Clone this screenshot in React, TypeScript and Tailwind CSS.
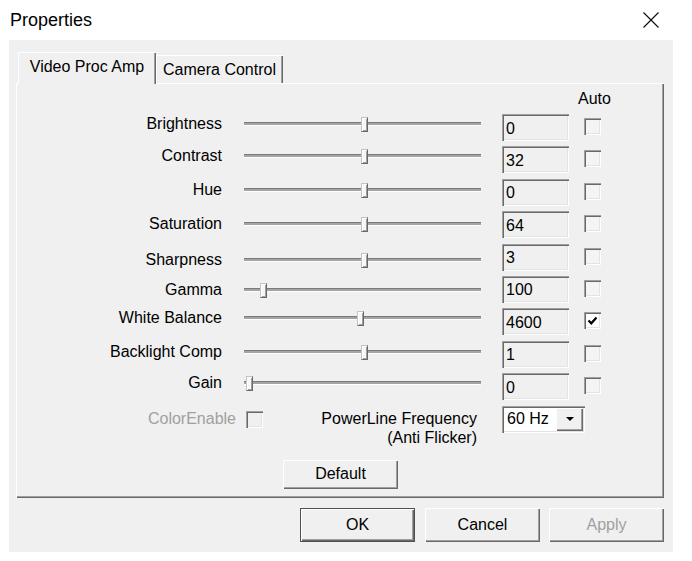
import React from "react";

const rows = [
  { label: "Brightness", value: "0", thumb: 117, off: 0, checked: false },
  { label: "Contrast", value: "32", thumb: 117, off: 0, checked: false },
  { label: "Hue", value: "0", thumb: 117, off: 1, checked: false },
  { label: "Saturation", value: "64", thumb: 117, off: 3, checked: false },
  { label: "Sharpness", value: "3", thumb: 117, off: 6, checked: false },
  { label: "Gamma", value: "100", thumb: 16, off: 4, checked: false },
  { label: "White Balance", value: "4600", thumb: 113, off: 0, checked: true },
  { label: "Backlight Comp", value: "1", thumb: 117, off: 1, checked: false },
  { label: "Gain", value: "0", thumb: 2, off: 0, checked: false },
];

function CheckBox({ checked, disabled }: { checked?: boolean; disabled?: boolean }) {
  return (
    <div
      className={
        "w-[17px] h-[17px] flex items-center justify-center shadow-[inset_1px_1px_0_#a0a0a0,inset_2px_2px_0_#696969,inset_-1px_-1px_0_#ffffff,inset_-2px_-2px_0_#e3e3e3] " +
        (checked ? "bg-white" : disabled ? "bg-[#f0f0f0]" : "bg-[#f4f4f4]")
      }
    >
      {checked && (
        <svg width="11" height="11" viewBox="0 0 11 11">
          <path d="M1.5 5.5 L4.3 8.3 L9.5 2.5" stroke="#000" strokeWidth="2.2" fill="none" />
        </svg>
      )}
    </div>
  );
}

function Slider({ thumb }: { thumb: number }) {
  return (
    <div className="relative w-[237px] h-[20px] pt-[8px]">
      <div className="h-[4px] bg-[#a4a4a4] border-t border-[#7a7a7a] border-b border-b-white" />
      <div
        className="absolute top-[3px] w-[7px] h-[15px] bg-[#f7f7f7] border border-[#c4c4c4] border-r-[#696969] border-b-[#696969] shadow-[inset_1px_1px_0_#ffffff,inset_-1px_-1px_0_#a0a0a0]"
        style={{ left: thumb }}
      />
    </div>
  );
}

function Button({ children, def, disabled, className }: { children: React.ReactNode; def?: boolean; disabled?: boolean; className?: string }) {
  return (
    <div
      className={
        "flex items-center justify-center bg-[#f0f0f0] text-[16px] " +
        (def
          ? "border border-[#505050] shadow-[inset_1px_1px_0_#ffffff,inset_-1px_-1px_0_#696969,inset_-2px_-2px_0_#a0a0a0] "
          : "shadow-[inset_1px_1px_0_#ffffff,inset_-1px_-1px_0_#696969,inset_-2px_-2px_0_#a0a0a0] ") +
        (disabled ? "text-[#a0a0a0] " : "text-black ") +
        (className || "")
      }
    >
      {children}
    </div>
  );
}

export default function App() {
  return (
    <div className="w-[692px] h-[561px] bg-white font-['Liberation_Sans',Arial,sans-serif] text-black overflow-hidden">
      {/* title bar */}
      <div className="h-[40px] flex items-center justify-between pl-[10px] pr-[33px]">
        <span className="text-[18px] leading-[22px]">Properties</span>
        <svg width="16" height="16" viewBox="0 0 16 16">
          <path d="M0.5 0.5 L15.5 15.5 M15.5 0.5 L0.5 15.5" stroke="#111" strokeWidth="1.2" />
        </svg>
      </div>

      {/* dialog body */}
      <div className="ml-[9px] w-[664px] h-[512px] bg-[#f0f0f0] flex flex-col">
        {/* tabs */}
        <div className="h-[43px] flex items-end pl-[9px]">
          <div className="relative z-10 mb-[-1px] w-[138px] h-[32px] bg-[#f0f0f0] flex items-start justify-center pt-[5px] text-[16px] leading-[20px] shadow-[inset_1px_1px_0_#ffffff,inset_-1px_0_0_#696969,inset_-2px_0_0_#a0a0a0]">
            Video Proc Amp
          </div>
          <div className="w-[127px] h-[28px] flex items-start justify-center pt-[5px] text-[16px] leading-[20px] shadow-[inset_1px_1px_0_#ffffff,inset_-1px_0_0_#696969,inset_-2px_0_0_#a0a0a0]">
            Camera Control
          </div>
        </div>

        {/* panel */}
        <div className="ml-[7px] w-[648px] h-[415px] flex flex-col shadow-[inset_1px_1px_0_#ffffff,inset_-1px_-1px_0_#696969,inset_-2px_-2px_0_#a0a0a0]">
          <div className="h-[31px] pl-[562px] pt-[7px] text-[16px] leading-[18px]">Auto</div>

          {rows.map((r) => (
            <div key={r.label} className="h-[32.4px] flex items-start">
              <div className="flex items-start" style={{ marginTop: r.off }}>
                <div className="w-[206px] text-right text-[16px] leading-[20px]">{r.label}</div>
                <div className="ml-[22px]">
                  <Slider thumb={r.thumb} />
                </div>
              </div>
              <div className="ml-[21px] w-[67px] h-[27px] flex items-center pl-[4px] pt-[2px] text-[16px] leading-[20px] bg-[#f0f0f0] shadow-[inset_1px_1px_0_#a0a0a0,inset_2px_2px_0_#696969,inset_-1px_-1px_0_#ffffff,inset_-2px_-2px_0_#e3e3e3]">
                {r.value}
              </div>
              <div className="ml-[15px] mt-[4px]">
                <CheckBox checked={r.checked} />
              </div>
            </div>
          ))}

          {/* bottom row */}
          <div className="h-[54px] flex items-start">
            <div className="w-[220px] text-right text-[16px] leading-[20px] mt-[3px] text-[#a0a0a0]">ColorEnable</div>
            <div className="ml-[10px] mt-[5px]">
              <CheckBox disabled />
            </div>
            <div className="w-[214px] text-right text-[16px] leading-[19px] mt-[3px]">
              <div>PowerLine Frequency</div>
              <div>(Anti Flicker)</div>
            </div>
            <div className="ml-[25px] w-[83px] h-[27px] flex items-center bg-white shadow-[inset_1px_1px_0_#a0a0a0,inset_2px_2px_0_#696969,inset_-1px_-1px_0_#ffffff,inset_-2px_-2px_0_#e3e3e3] p-[2px]">
              <div className="flex-1 pl-[3px] text-[16px] leading-[20px]">60 Hz</div>
              <div className="w-[27px] h-[23px] bg-[#f0f0f0] flex items-center justify-center shadow-[inset_1px_1px_0_#ffffff,inset_-1px_-1px_0_#696969,inset_-2px_-2px_0_#a0a0a0]">
                <svg width="10" height="6" viewBox="0 0 10 6">
                  <path d="M1 1 L9 1 L5 5 Z" fill="#000" />
                </svg>
              </div>
            </div>
          </div>

          <div className="pl-[267px]">
            <Button className="w-[115px] h-[29px]">Default</Button>
          </div>
        </div>

        {/* button row */}
        <div className="mt-[10px] flex justify-end pr-[9px]">
          <Button def className="w-[115px] h-[34px]">OK</Button>
          <Button className="ml-[10px] w-[115px] h-[34px]">Cancel</Button>
          <Button disabled className="ml-[9px] w-[115px] h-[34px]">Apply</Button>
        </div>
      </div>
    </div>
  );
}
